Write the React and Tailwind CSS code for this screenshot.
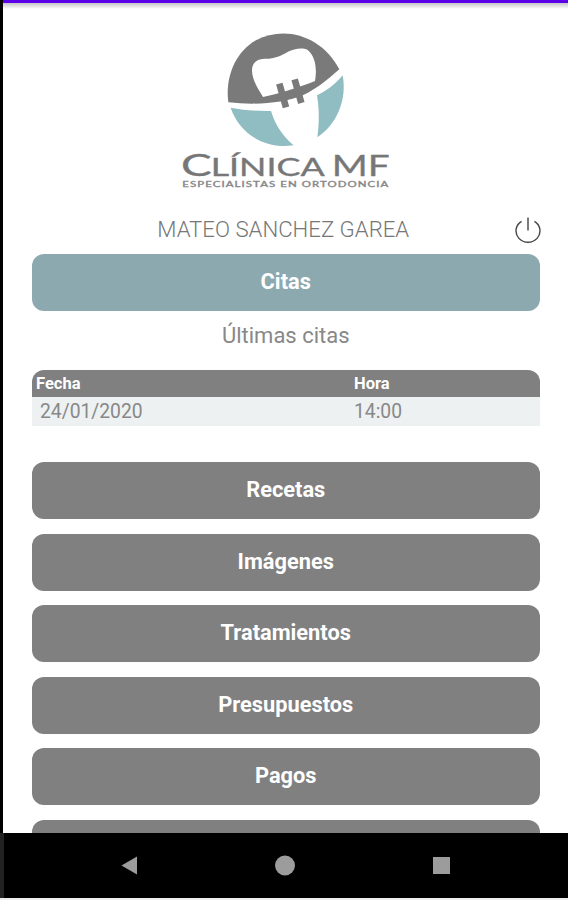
import clsx from 'clsx';

const SECTIONS = ['Recetas', 'Imágenes', 'Tratamientos', 'Presupuestos', 'Pagos'];

const APPOINTMENTS = [{ date: '24/01/2020', time: '14:00' }];

function Logo() {
  return (
    <svg viewBox="0 0 690 540" className="block h-[180px] w-[230px]" fontFamily="Lato, sans-serif">
      {/* Upper jaw */}
      <path
        fill="#7a7a7a"
        d="M175 247C165 175 194 97 258 61C345 14 457 49 508 148C470 182 437 208 400 225C340 250 258 256 175 247Z"
      />
      {/* Lower jaw */}
      <path
        fill="#90bdc2"
        d="M182 263C220 270 262 274 303 273C314 312 340 351 371 376C284 390 208 340 182 263Z"
      />
      <path fill="#90bdc2" d="M518 166C532 239 500 315 442 352C448 309 448 270 441 226C470 213 496 192 518 166Z" />
      {/* Tooth crown */}
      <path
        fill="#fff"
        d="M279 231C265 207 246 180 246 151C246 129 260 117 283 116C313 117 333 107 354 95C371 87 397 81 413 90C438 110 441 150 435 183C400 198 330 220 279 231Z"
      />
      {/* Bracket */}
      <path d="M328 191L348 262M374 178L394 249" fill="none" stroke="#7a7a7a" strokeWidth="20" />
      <g fill="#777" stroke="#777" strokeWidth="1">
        <text x="33" y="469" fontSize="90" textLength="92" lengthAdjust="spacingAndGlyphs">C</text>
        <text x="122" y="469" fontSize="76" textLength="342" lengthAdjust="spacingAndGlyphs">LÍNICA</text>
        <text x="485" y="469" fontSize="88" textLength="174" lengthAdjust="spacingAndGlyphs">MF</text>
        <text
          x="37"
          y="502"
          fontSize="21"
          fill="#888"
          stroke="#888"
          letterSpacing="2"
          textLength="621"
          lengthAdjust="spacingAndGlyphs"
        >
          ESPECIALISTAS EN ORTODONCIA
        </text>
      </g>
    </svg>
  );
}

function PowerIcon() {
  return (
    <svg viewBox="0 0 26 26" className="h-[26px] w-[26px]" fill="none" stroke="#444" strokeWidth="1.4">
      <path d="M13 0.5V13.5M6.5 4.3A12 11.4 0 1 0 19.5 4.3" />
    </svg>
  );
}

function MenuButton({ active, children }) {
  return (
    <button
      className={clsx(
        'h-[57px] w-full shrink-0 rounded-[12px] text-center text-[21.8px] leading-[56px] font-bold text-white',
        'flex items-start justify-center',
        active ? 'bg-[#8da9b0]' : 'bg-[#808080]'
      )}
    >
      {children}
    </button>
  );
}

function AppointmentsTable({ items }) {
  return (
    <div className="mt-[19.5px] w-full overflow-hidden rounded-t-[12px]">
      <div className="grid h-[26.5px] grid-cols-[318px_1fr] bg-[#808080] pl-[4.5px] text-[16.5px] leading-[27px] font-bold text-white">
        <span>Fecha</span>
        <span>Hora</span>
      </div>
      {items.map((item) => (
        <div
          key={item.date}
          className="grid h-[29.5px] grid-cols-[314px_1fr] bg-[#edf1f2] pl-[8.5px] text-[19.3px] leading-[29px] text-[#888]"
        >
          <span>{item.date}</span>
          <span>{item.time}</span>
        </div>
      ))}
    </div>
  );
}

function NavigationBar() {
  return (
    <nav className="h-[65px] shrink-0 bg-black">
      <svg viewBox="0 0 568 65" className="block h-[65px] w-[568px]" fill="#9c9c9c">
        <path d="M0 0H4V65H0Z" fill="#222" />
        <path d="M121.5 32.5L137 23.5V41.5Z" />
        <circle cx="285" cy="32.5" r="10" />
        <rect x="433" y="24" width="17" height="17" />
      </svg>
    </nav>
  );
}

export default function App() {
  return (
    <div className="flex h-[900px] w-[568px] flex-col overflow-hidden bg-[#eee] font-[Roboto,sans-serif]">
      <div className="flex h-[833px] shrink-0 flex-col overflow-hidden border-l-[3px] border-black bg-white">
        <div className="h-[3px] shrink-0 bg-[#5b00e8]" />
        <div className="h-[6px] shrink-0 bg-linear-to-b from-[#c4c4c8] to-white" />
        <main className="flex flex-col items-center pr-[28px] pl-[28.5px]">
          <header className="mt-[11px] flex w-full justify-center pr-[1px]">
            <Logo />
          </header>
          <div className="mt-[14px] -mr-[2px] grid h-[32px] w-full grid-cols-[26px_1fr_26px] items-center text-[#777]">
            <span />
            <h1 className="pr-[7px] pb-[2px] text-center text-[22.2px] leading-[30px] font-light">
              MATEO SANCHEZ GAREA
            </h1>
            <PowerIcon />
          </div>
          <div className="mt-[8.4px] w-full">
            <MenuButton active>Citas</MenuButton>
          </div>
          <h2 className="mt-[10px] h-[29.5px] text-[22px] leading-[30px] text-[#888]">Últimas citas</h2>
          <AppointmentsTable items={APPOINTMENTS} />
          <div className="mt-[36px] flex w-full flex-col gap-[14.5px]">
            {SECTIONS.map((section) => (
              <MenuButton key={section}>{section}</MenuButton>
            ))}
            <MenuButton />
          </div>
        </main>
      </div>
      <NavigationBar />
    </div>
  );
}
